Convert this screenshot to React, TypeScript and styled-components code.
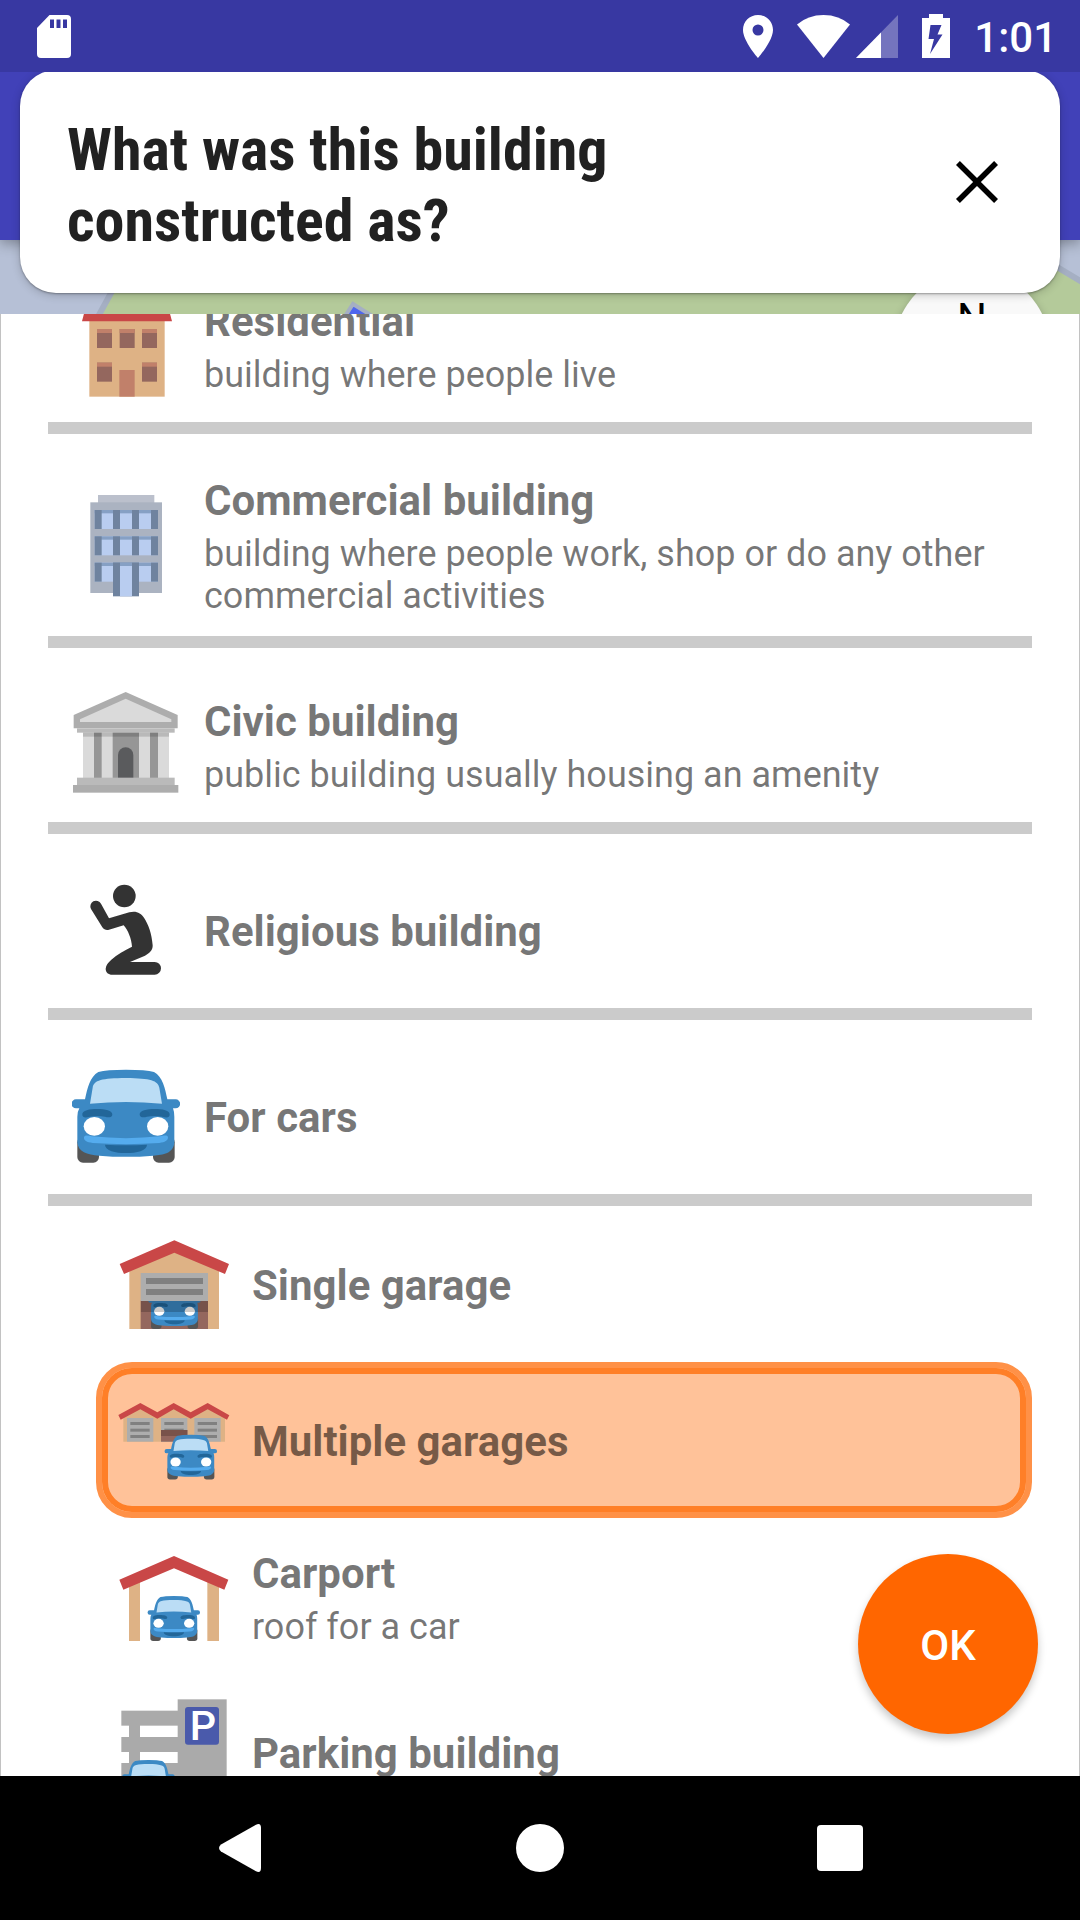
import React, { useState } from "react";
import styled, { createGlobalStyle } from "styled-components";

const GlobalStyle = createGlobalStyle`
  *, *::before, *::after { box-sizing: border-box; }
  html, body { margin: 0; padding: 0; }
  body { font-family: Roboto, "Noto Sans", sans-serif; background: #000; }
  button { font: inherit; color: inherit; border: 0; padding: 0; background: none; cursor: pointer; }
`;

const Screen = styled.div`
  display: flex;
  flex-direction: column;
  height: 100vh;
  overflow: hidden;
`;

/* ---------- status bar ---------- */

const StatusBar = styled.header`
  position: relative;
  z-index: 2;
  flex: none;
  display: flex;
  align-items: center;
  justify-content: space-between;
  height: 72px;
  padding: 0 23px 0 37px;
  background: #3838a2;
  color: #fff;
`;

const StatusGroup = styled.div<{ $gap: number }>`
  display: flex;
  align-items: center;
  gap: ${(p) => p.$gap}px;
`;

const Clock = styled.time`
  padding-top: 4px;
  font-size: 42px;
  font-weight: 500;
  line-height: 48px;
`;

/* ---------- question header ---------- */

const Top = styled.section`
  position: relative;
  flex: none;
  padding: 0 20px 21px;
`;

const Backdrop = styled.div`
  position: absolute;
  inset: 0;
  display: flex;
  flex-direction: column;
  overflow: hidden;
`;

const AppBar = styled.div`
  position: relative;
  z-index: 1;
  flex: none;
  height: 168px;
  background: #4141b8;
  box-shadow: 0 4px 12px rgba(0, 0, 0, 0.3);
`;

const MapView = styled.div`
  position: relative;
  flex: 1;
  background: #b6c0d6;
`;

const MapDrawing = styled.svg`
  display: block;
  width: 100%;
  height: 100%;
`;

const Compass = styled.button`
  position: absolute;
  top: 30px;
  right: 30px;
  width: 156px;
  height: 156px;
  padding-top: 25px;
  border-radius: 50%;
  display: flex;
  justify-content: center;
  background: #f9f9f9;
  box-shadow: 0 3px 8px rgba(0, 0, 0, 0.25);
  color: #000;
  font-size: 42px;
  font-weight: 400;
  line-height: 48px;
`;

const Card = styled.div`
  position: relative;
  z-index: 1;
  display: flex;
  align-items: center;
  justify-content: space-between;
  margin-top: -2px;
  padding: 0 47px;
  border-radius: 36px;
  background: #fff;
  box-shadow: 0 1px 2px rgba(0, 0, 0, 0.3), 0 2px 10px rgba(0, 0, 0, 0.2);
`;

const Question = styled.h1`
  margin: 0;
  padding: 44px 0 37px;
  max-width: 640px;
  font-family: "Roboto Condensed", Roboto, sans-serif;
  font-size: 60px;
  font-weight: 700;
  line-height: 71px;
  color: #212121;
`;

const CloseButton = styled.button`
  flex: none;
  width: 72px;
  height: 72px;
  color: #000;
`;

/* ---------- answer list ---------- */

const Panel = styled.main`
  position: relative;
  z-index: 1;
  flex: 1;
  min-height: 0;
  overflow: hidden;
  padding: 0 47px;
  border: solid #c2c2c2;
  border-width: 0 1px;
  background: #fff;
`;

const List = styled.ul`
  list-style: none;
  margin: -66px 0 0;
  padding: 0;
`;

const Item = styled.li<{ $group: boolean }>`
  padding-top: ${(p) => (p.$group ? 18 : 0)}px;
  padding-left: ${(p) => (p.$group ? 0 : 48)}px;
  border-bottom: ${(p) => (p.$group ? "12px solid #cbcbcb" : "0")};
`;

const Choice = styled.button<{ $selected: boolean }>`
  display: flex;
  align-items: center;
  gap: 24px;
  width: 100%;
  min-height: 156px;
  padding: 13px 18px;
  text-align: left;
  color: rgba(0, 0, 0, 0.54);
  border: 6px solid ${(p) => (p.$selected ? "#ff9147" : "transparent")};
  border-radius: 36px;
  background: ${(p) => (p.$selected ? "#ffc299" : "transparent")};
  box-shadow: ${(p) => (p.$selected ? "inset 0 0 0 6px #ff7f27" : "none")};
`;

const Picture = styled.svg`
  flex: none;
  width: 108px;
  height: 108px;
`;

const Texts = styled.span<{ $detailed: boolean }>`
  display: flex;
  flex-direction: column;
  gap: 8px;
  padding-top: ${(p) => (p.$detailed ? 5 : 3)}px;
`;

const Name = styled.span`
  font-size: 42px;
  font-weight: 700;
  line-height: 49px;
`;

const Description = styled.span`
  font-size: 36px;
  line-height: 42px;
`;

const OkButton = styled.button`
  position: absolute;
  right: 41px;
  bottom: 42px;
  width: 180px;
  height: 180px;
  padding-top: 2px;
  border-radius: 50%;
  background: #ff6600;
  color: #fff;
  font-size: 42px;
  font-weight: 500;
  box-shadow: 0 5px 9px rgba(0, 0, 0, 0.22);
`;

/* ---------- navigation bar ---------- */

const NavBar = styled.nav`
  flex: none;
  display: flex;
  justify-content: center;
  height: 144px;
  background: #000;
`;

const NavButton = styled.button`
  flex: 1;
  max-width: 300px;
  display: flex;
  align-items: center;
  justify-content: center;
`;

/* ---------- drawings ---------- */

const Car = ({ at }: { at?: [number, number] }) => (
  <g transform={at ? `translate(${at[0]} ${at[1]}) scale(0.483)` : undefined}>
    <rect x="112" y="350" width="65" height="78" rx="17" fill="#555" />
    <rect x="339" y="350" width="65" height="78" rx="17" fill="#555" />
    <path
      fill="#3c89c4"
      d="M135 238C142 205 150 170 175 156Q200 149 258 149Q318 149 342 156C368 170 375 205 382 238L407 238A13 13 0 0 1 407 265L399 265Q403 275 403 290L403 368C400 400 370 404 340 407Q258 414 178 407C140 403 115 395 112 368L112 290Q112 275 118 265L108 265A13 13 0 0 1 108 238Z"
    />
    <path fill="#bbddf5" d="M150 251L158 203C162 180 185 175 258 174C332 175 354 182 358 203L366 251Q258 241 150 251Z" />
    {["", "translate(516 0) scale(-1 1)"].map((t) => (
      <g key={t} transform={t || undefined}>
        <path
          fill="#226699"
          d="M127 285C125 270 150 267 172 267C195 267 218 271 217 284C216 293 205 293 195 290Q172 286 150 290C135 294 128 293 127 285Z"
        />
        <ellipse cx="163" cy="319" rx="32" ry="28" fill="#fff" />
      </g>
    ))}
    <path
      fill="#55acee"
      d="M132 352C133 344 145 346 155 349Q258 360 360 349C372 346 384 344 384 352C384 362 375 367 358 369Q258 376 158 369C140 367 131 362 132 352Z"
    />
    <path fill="#226699" d="M195 374Q258 378 321 374C321 392 290 399 258 399C226 399 195 392 195 374Z" />
  </g>
);

const Residential = () => (
  <Picture viewBox="216 -30 324 324" aria-hidden="true">
    <rect x="268" y="50" width="226" height="240" fill="#deb285" />
    <path fill="#c94747" d="M268 -20H494L516 64H246Z" />
    {[
      [291, 87],
      [359, 87],
      [426, 87],
      [291, 188],
      [426, 188],
    ].map(([x, y]) => (
      <g key={`${x}-${y}`}>
        <rect x={x} y={y} width="45" height="57" fill="#94675e" />
        <rect x={x} y={y} width="45" height="12" fill="#c1806a" />
      </g>
    ))}
    <rect x="358" y="210" width="46" height="80" fill="#c1806a" />
  </Picture>
);

const Commercial = () => (
  <Picture viewBox="216 570 324 324" aria-hidden="true">
    <rect x="294" y="585" width="169" height="24" fill="#bbc0cc" />
    <rect x="271" y="607" width="215" height="272" fill="#abb3c1" />
    {[630, 709, 788].map((y) => (
      <g key={y}>
        <rect x="284" y={y} width="190" height="57" fill="#b9cdf0" />
        <rect x="284" y={y} width="190" height="10" fill="#86a0c4" />
        {[284, 339, 396, 453].map((x) => (
          <rect key={x} x={x} y={y} width="21" height="57" fill="#6f839f" />
        ))}
      </g>
    ))}
    <rect x="339" y="788" width="78" height="101" fill="#6f839f" />
    <rect x="360" y="798" width="36" height="91" fill="#b9cdf0" />
    <rect x="360" y="788" width="36" height="10" fill="#86a0c4" />
  </Picture>
);

const Civic = () => (
  <Picture viewBox="96 90 324 324" aria-hidden="true">
    <rect x="129" y="216" width="258" height="138" fill="#dadada" />
    <rect x="162" y="216" width="23" height="138" fill="#969696" />
    <rect x="218" y="216" width="79" height="138" fill="#969696" />
    <rect x="330" y="216" width="24" height="138" fill="#969696" />
    <rect x="129" y="218" width="258" height="12" fill="#000" opacity="0.15" />
    <path fill="#5a5b5d" d="M234 354V285A23 23 0 0 1 280 285V354Z" />
    <path fill="#adadad" d="M257 96L413 165V205H101V165Z" />
    <path fill="#dadada" d="M257 116L394 178V186H120V178Z" />
    <rect x="111" y="205" width="293" height="13" fill="#bababa" />
    <rect x="111" y="353" width="293" height="23" fill="#bababa" />
    <rect x="99" y="375" width="316" height="23" fill="#adadad" />
  </Picture>
);

const Religious = () => (
  <Picture viewBox="96 648 324 324" aria-hidden="true">
    <g fill="#333">
      <circle cx="253" cy="708" r="34" />
      <path d="M183 731L207 775L268 757C288 751 303 759 312 773C326 795 335 820 338 856C339 871 327 881 315 887L270 906L344 906A19 19 0 0 1 344 944L217 944C205 944 197 937 197 926C198 915 204 908 214 899C232 883 252 872 276 860C275 838 264 810 251 796L207 809C199 811 192 809 187 802L153 747A17 17 0 0 1 183 731Z" />
    </g>
  </Picture>
);

const Cars = () => (
  <Picture viewBox="96 126 324 324" aria-hidden="true">
    <Car />
  </Picture>
);

const SingleGarage = () => (
  <Picture viewBox="120 30 324 324" overflow="visible" aria-hidden="true">
    <clipPath id="doorway">
      <rect x="182" y="242" width="202" height="85" />
    </clipPath>
    <path fill="#deb285" d="M148 150L283 90L417 150V327H148Z" />
    <rect x="182" y="242" width="202" height="85" fill="#94675e" />
    <g clipPath="url(#doorway)">
      <Car at={[159, 120]} />
      <rect x="182" y="242" width="202" height="34" fill="#000" opacity="0.2" />
    </g>
    <rect x="182" y="159" width="202" height="84" fill="#adadad" />
    <rect x="198" y="174" width="171" height="18" fill="#808080" />
    <rect x="198" y="207" width="171" height="18" fill="#808080" />
    <path fill="#c94747" d="M119 132L283 61L447 132L435 162L283 98L132 162Z" />
  </Picture>
);

const MultipleGarages = () => (
  <Picture viewBox="120 108 324 324" overflow="visible" aria-hidden="true">
    <path fill="#deb285" d="M130 200L181 172L232 200L281 172L332 200L383 172L435 200V275H130Z" />
    {[141, 243, 343].map((x) => (
      <g key={x}>
        <rect x={x} y="204" width="79" height="71" fill="#adadad" />
        {[216, 236, 255].map((y) => (
          <rect key={y} x={x + 10} y={y} width="58" height="9" fill="#808080" />
        ))}
      </g>
    ))}
    <rect x="243" y="240" width="79" height="35" fill="#94675e" />
    <rect x="243" y="240" width="79" height="18" fill="#79524a" />
    <path
      fill="#c94747"
      d="M115 195L181 159L232 187L281 159L332 187L383 159L448 196L441 209L383 178L332 206L281 178L232 206L181 178L122 209Z"
    />
    <Car at={[208, 182]} />
  </Picture>
);

const Carport = () => (
  <Picture viewBox="120 36 324 324" overflow="visible" aria-hidden="true">
    <rect x="147" y="155" width="33" height="178" fill="#deb285" />
    <rect x="382" y="155" width="35" height="178" fill="#deb285" />
    <path fill="#c94747" d="M118 149L282 78L445 149L433 179L282 115L130 179Z" />
    <Car at={[157, 126]} />
  </Picture>
);

const ParkingBuilding = () => (
  <Picture viewBox="120 504 324 324" aria-hidden="true">
    <g fill="#aaa">
      <rect x="293" y="508" width="147" height="320" />
      <rect x="124" y="542" width="170" height="45" />
      <rect x="124" y="621" width="170" height="45" />
      <rect x="124" y="699" width="170" height="129" />
      <rect x="147" y="580" width="33" height="130" />
    </g>
    <rect x="315" y="531" width="102" height="113" rx="9" fill="#4a5aab" />
    <text x="329" y="631" fontSize="124" fontWeight="500" fill="#fff">
      P
    </text>
    <Car at={[81, 618]} />
  </Picture>
);

/* ---------- data ---------- */

type Entry = {
  id: string;
  name: string;
  description?: string;
  group?: boolean;
  Icon: React.FC;
};

const entries: Entry[] = [
  { id: "residential", name: "Residential", description: "building where people live", group: true, Icon: Residential },
  {
    id: "commercial",
    name: "Commercial building",
    description: "building where people work, shop or do any other commercial activities",
    group: true,
    Icon: Commercial,
  },
  { id: "civic", name: "Civic building", description: "public building usually housing an amenity", group: true, Icon: Civic },
  { id: "religious", name: "Religious building", group: true, Icon: Religious },
  { id: "cars", name: "For cars", group: true, Icon: Cars },
  { id: "garage", name: "Single garage", Icon: SingleGarage },
  { id: "garages", name: "Multiple garages", Icon: MultipleGarages },
  { id: "carport", name: "Carport", description: "roof for a car", Icon: Carport },
  { id: "parking", name: "Parking building", Icon: ParkingBuilding },
];

export default function App() {
  const [selected, setSelected] = useState("garages");

  return (
    <>
      <GlobalStyle />
      <Screen>
        <StatusBar>
          <svg width="34" height="43" viewBox="0 0 34 43" fill="#fff" aria-hidden="true">
            <path
              fillRule="evenodd"
              d="M12.500 0H30Q34 0 34 4V39Q34 43 30 43H4Q0 43 0 39V13ZM13 4.500V13H17V4.500ZM19.500 4.500V13H23.500V4.500ZM26 4.500V13H30V4.500Z"
            />
          </svg>
          <StatusGroup $gap={24}>
            <svg width="30" height="43" viewBox="0 0 30 43" fill="#fff" aria-hidden="true">
              <path fillRule="evenodd" d="M15 0C6.500 0 0 6.600 0 15C0 26 15 43 15 43S30 26 30 15C30 6.600 23.500 0 15 0ZM15 9.500A5.500 5.500 0 1 1 15 20.500A5.500 5.500 0 1 1 15 9.500Z" />
            </svg>
            <StatusGroup $gap={6}>
              <svg width="53" height="43" viewBox="0 0 53 43" fill="#fff" aria-hidden="true">
                <path d="M0 9.500Q11 0 26.500 0T53 9.500L26.500 43Z" />
              </svg>
              <svg width="42" height="43" viewBox="0 0 42 43" fill="#fff" aria-hidden="true">
                <path opacity="0.3" d="M42 0V43H0Z" />
                <path d="M25 17.400V43H0Z" />
              </svg>
            </StatusGroup>
            <svg width="28" height="44" viewBox="0 0 28 44" fill="#fff" aria-hidden="true">
              <path fillRule="evenodd" d="M7 0H21V4H28V44H0V4H7ZM8.500 11L6.500 25H12L8 40L20.500 20.500H15.500L19.500 11Z" />
            </svg>
            <Clock>1:01</Clock>
          </StatusGroup>
        </StatusBar>

        <Top>
          <Backdrop>
            <AppBar />
            <MapView>
              <MapDrawing viewBox="0 0 1080 74" preserveAspectRatio="none" aria-hidden="true">
                <path
                  d="M94 84L140 0H1012L1152 84Z"
                  fill="#b4ca9a"
                  stroke="#a5afc3"
                  strokeWidth="6"
                />
                <path d="M340 84L353 64L385 84Z" fill="#4f66ee" stroke="#a5afc3" strokeWidth="4" />
              </MapDrawing>
              <Compass type="button" aria-label="N: point map north">
                N
              </Compass>
            </MapView>
          </Backdrop>
          <Card>
            <Question>What was this building constructed as?</Question>
            <CloseButton type="button" aria-label="Close">
              <svg width="72" height="72" viewBox="0 0 24 24" fill="currentColor" aria-hidden="true">
                <path d="M19 6.300L17.700 5L12 10.700L6.300 5L5 6.300L10.700 12L5 17.700L6.300 19L12 13.300L17.700 19L19 17.700L13.300 12Z" />
              </svg>
            </CloseButton>
          </Card>
        </Top>

        <Panel>
          <List>
            {entries.map(({ id, name, description, group, Icon }) => (
              <Item key={id} $group={!!group}>
                <Choice
                  type="button"
                  $selected={selected === id}
                  aria-pressed={selected === id}
                  onClick={() => setSelected(id)}
                >
                  <Icon />
                  <Texts $detailed={!!description}>
                    <Name>{name}</Name>
                    {description && <Description>{description}</Description>}
                  </Texts>
                </Choice>
              </Item>
            ))}
          </List>
          <OkButton type="button">OK</OkButton>
        </Panel>

        <NavBar>
          <NavButton type="button" aria-label="Back">
            <svg width="42" height="48" viewBox="0 0 42 48" fill="#fff" aria-hidden="true">
              <path d="M37 .7Q42 -1.500 42 4V44Q42 49.500 37 47.300L2 27.500Q-2 24 2 20.500Z" />
            </svg>
          </NavButton>
          <NavButton type="button" aria-label="Home">
            <svg width="48" height="48" viewBox="0 0 48 48" fill="#fff" aria-hidden="true">
              <circle cx="24" cy="24" r="24" />
            </svg>
          </NavButton>
          <NavButton type="button" aria-label="Recent apps">
            <svg width="46" height="46" viewBox="0 0 46 46" fill="#fff" aria-hidden="true">
              <rect width="46" height="46" rx="4" />
            </svg>
          </NavButton>
        </NavBar>
      </Screen>
    </>
  );
}
